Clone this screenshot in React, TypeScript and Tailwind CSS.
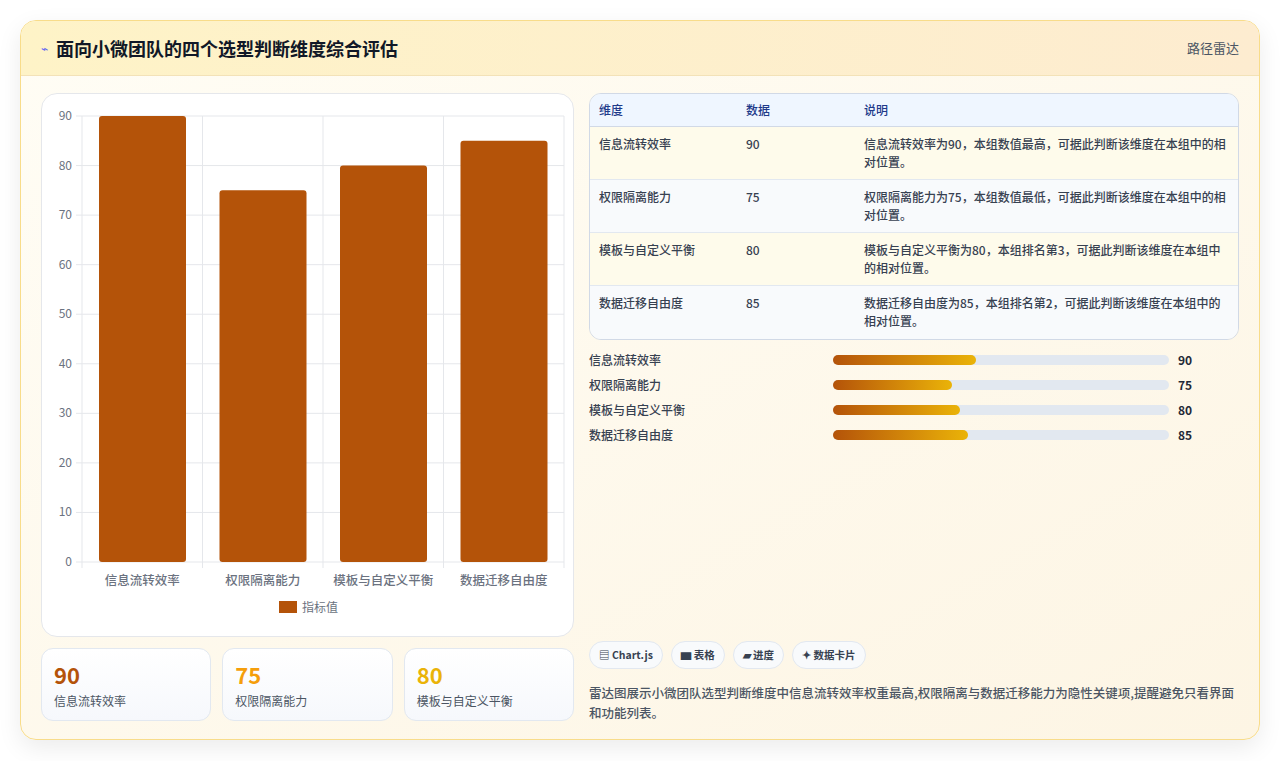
const font = { fontFamily: '"Noto Sans CJK SC", "Liberation Sans", sans-serif' };

const rows = [
  { name: '信息流转效率', v: 90, desc: '信息流转效率为90，本组数值最高，可据此判断该维度在本组中的相对位置。', w: 143 },
  { name: '权限隔离能力', v: 75, desc: '权限隔离能力为75，本组数值最低，可据此判断该维度在本组中的相对位置。', w: 119 },
  { name: '模板与自定义平衡', v: 80, desc: '模板与自定义平衡为80，本组排名第3，可据此判断该维度在本组中的相对位置。', w: 127 },
  { name: '数据迁移自由度', v: 85, desc: '数据迁移自由度为85，本组排名第2，可据此判断该维度在本组中的相对位置。', w: 135 },
];

function Chart() {
  const top = 22, bottom = 468, left = 40, right = 522;
  const h = bottom - top;
  const cw = (right - left) / 4;
  const ticks = [0, 10, 20, 30, 40, 50, 60, 70, 80, 90];
  return (
    <svg width="533" height="541" style={font}>
      {ticks.map((t) => {
        const y = bottom - (t / 90) * h;
        return (
          <g key={t}>
            <line x1={left - 6} x2={right} y1={y} y2={y} stroke="#e5e7eb" />
            <text x={left - 10} y={y + 4} textAnchor="end" fontSize="12" fill="#6b7280">{t}</text>
          </g>
        );
      })}
      {[0, 1, 2, 3, 4].map((i) => (
        <line key={i} x1={left + i * cw} x2={left + i * cw} y1={top} y2={bottom + 6} stroke="#e5e7eb" />
      ))}
      {rows.map((r, i) => {
        const bh = (r.v / 90) * h;
        return (
          <g key={r.name}>
            <rect x={left + i * cw + 17} y={bottom - bh} width={87} height={bh} rx="3" fill="#b45309" />
            <text x={left + i * cw + cw / 2} y={bottom + 23} textAnchor="middle" fontSize="12.5" fill="#6b7280" fontWeight="500">{r.name}</text>
          </g>
        );
      })}
      <rect x="237" y="507" width="18" height="12" fill="#b45309" />
      <text x="260" y="518" fontSize="12" fill="#6b7280">指标值</text>
    </svg>
  );
}

export default function App() {
  return (
    <div className="w-[1280px] h-[761px] bg-white pt-5 px-5" style={font}>
      <div className="h-[720px] rounded-2xl border border-[#f8dc8a] bg-gradient-to-br from-[#fffdf5] to-[#fdf5e4] shadow-[0_8px_24px_rgba(0,0,0,0.08)] overflow-hidden flex flex-col">
        <div className="h-[55px] shrink-0 flex items-center justify-between px-5 bg-gradient-to-r from-[#fef3c7] to-[#fdecd0] border-b border-[#f3e2b8]">
          <div className="flex items-center gap-2">
            <span className="text-[#6366f1] text-xs">⌁</span>
            <span className="text-[18px] font-bold text-[#111827]">面向小微团队的四个选型判断维度综合评估</span>
          </div>
          <span className="text-[13px] text-[#4b5563]">路径雷达</span>
        </div>
        <div className="flex gap-[15px] px-5 pt-[17px]">
          <div className="w-[533px] flex flex-col gap-[11px]">
            <div className="h-[544px] bg-white rounded-2xl border border-[#e5e7eb]">
              <Chart />
            </div>
            <div className="grid grid-cols-3 gap-[11px]">
              {rows.slice(0, 3).map((r, i) => (
                <div key={r.name} className="h-[73px] rounded-xl border border-[#e2e8f0] bg-gradient-to-b from-white to-[#f6f8fc] px-3 pt-[11px]">
                  <div className={`text-[22px] font-bold leading-7 ${i === 0 ? 'text-[#b45309]' : i === 1 ? 'text-[#f59e0b]' : 'text-[#eab308]'}`}>{r.v}</div>
                  <div className="text-[12px] text-[#4b5563] mt-1">{r.name}</div>
                </div>
              ))}
            </div>
          </div>
          <div className="flex-1 flex flex-col">
            <div className="rounded-xl border border-[#d1d9e6] overflow-hidden text-[12px] text-[#374151] font-medium">
              <div className="flex h-[33px] items-center bg-[#eff6ff] text-[#1e3a8a] border-b border-[#d1d9e6]">
                <div className="w-[156px] pl-[9px]">维度</div>
                <div className="w-[118px]">数据</div>
                <div className="flex-1">说明</div>
              </div>
              {rows.map((r, i) => (
                <div key={r.name} className={`flex h-[53px] pt-[8px] ${i % 2 === 0 ? 'bg-[#fefbeb]' : 'bg-[#f8fafc]'} ${i < 3 ? 'border-b border-[#e2e8f0]' : ''}`}>
                  <div className="w-[156px] pl-[9px] leading-[18px]">{r.name}</div>
                  <div className="w-[118px] leading-[18px]">{r.v}</div>
                  <div className="flex-1 pr-2 leading-[18px]">{r.desc}</div>
                </div>
              ))}
            </div>
            <div className="flex flex-col gap-[7px] mt-[11px]">
              {rows.map((r) => (
                <div key={r.name} className="flex items-center h-[18px] text-[12px] text-[#374151] font-medium">
                  <div className="w-[244px]">{r.name}</div>
                  <div className="w-[336px] h-[10px] rounded-full bg-[#e2e8f0]">
                    <div className="h-full rounded-full bg-gradient-to-r from-[#b45309] to-[#eab308]" style={{ width: r.w }} />
                  </div>
                  <div className="ml-[9px] font-bold text-[#1f2937]">{r.v}</div>
                </div>
              ))}
            </div>
            <div className="flex-1" />
            <div className="flex gap-2 text-[10.5px] font-bold text-[#374151] mb-[14px] mt-[197px]">
              <span className="h-[28px] flex items-center px-[9px] rounded-full border border-[#e2e8f0] bg-[#f8fafc]">▤ Chart.js</span>
              <span className="h-[28px] flex items-center px-[9px] rounded-full border border-[#e2e8f0] bg-[#f8fafc]">▆ 表格</span>
              <span className="h-[28px] flex items-center px-[9px] rounded-full border border-[#e2e8f0] bg-[#f8fafc]">▰ 进度</span>
              <span className="h-[28px] flex items-center px-[9px] rounded-full border border-[#e2e8f0] bg-[#f8fafc]">✦ 数据卡片</span>
            </div>
            <p className="text-[12.5px] leading-[20px] text-[#4b5563] font-medium">雷达图展示小微团队选型判断维度中信息流转效率权重最高,权限隔离与数据迁移能力为隐性关键项,提醒避免只看界面和功能列表。</p>
          </div>
        </div>
      </div>
    </div>
  );
}
